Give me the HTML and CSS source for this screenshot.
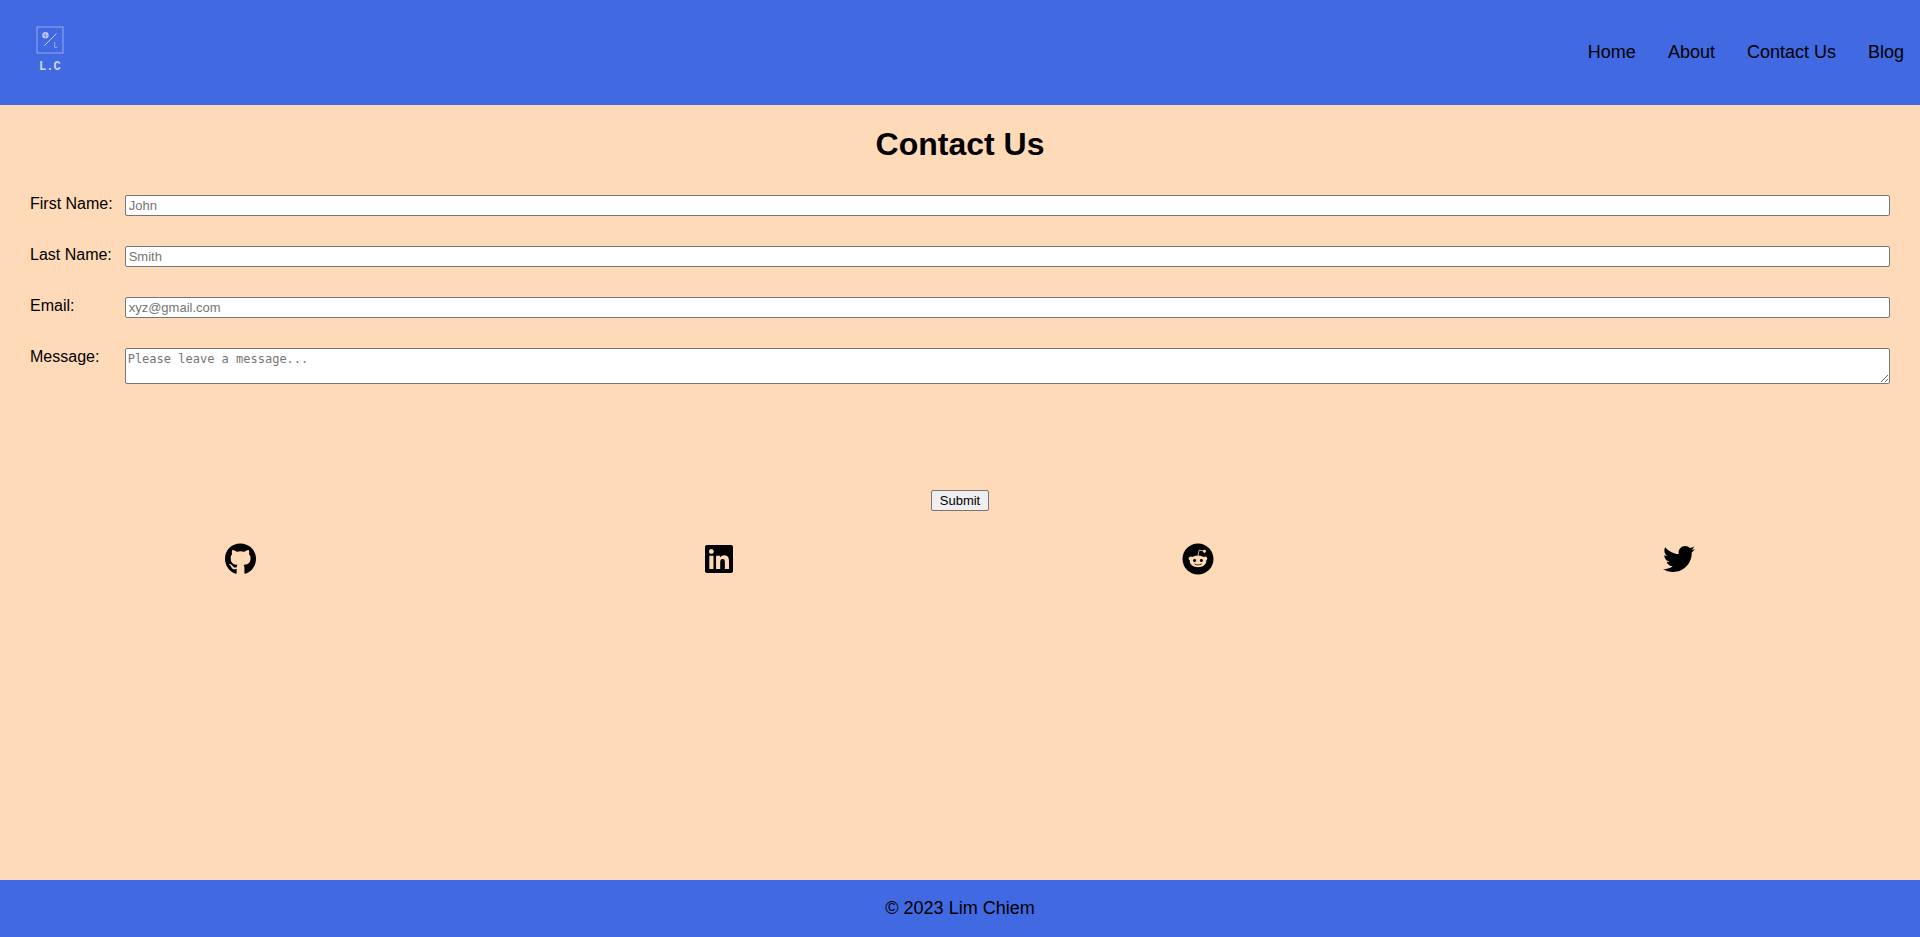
FILE: index.html
```html
<!DOCTYPE html>
<html lang="en">
<head>
<meta charset="utf-8">
<meta name="viewport" content="width=device-width, initial-scale=1">
<title>Contact Us</title>
<link rel="stylesheet" href="styles.css">
</head>
<body>
<header class="header">
  <a class="logo" href="#" aria-label="Home page">
    <svg width="60" height="60" viewBox="0 0 60 60">
      <rect class="logo-line" x="17" y="5" width="26" height="26"/>
      <path class="logo-line logo-slash" d="M24.3 23.7 36.5 11.5"/>
      <circle class="logo-dot" cx="25.4" cy="13.3" r="3.2"/>
      <path class="logo-grid" d="M22.4 13.3h6M25.4 10.3v6M23.4 11.3l4 4"/>
      <path class="logo-line" d="M34.7 20v5.4h2.6"/>
      <text class="logo-name" x="19" y="48">L.C</text>
    </svg>
  </a>
  <nav class="nav">
    <a href="#">Home</a>
    <a href="#">About</a>
    <a href="#">Contact Us</a>
    <a href="#">Blog</a>
  </nav>
</header>
<main class="main">
  <h1 class="title">Contact Us</h1>
  <form class="form">
    <div class="fields">
      <label for="first">First Name:</label>
      <input id="first" type="text" placeholder="John">
      <label for="last">Last Name:</label>
      <input id="last" type="text" placeholder="Smith">
      <label for="email">Email:</label>
      <input id="email" type="email" placeholder="xyz@gmail.com">
      <label for="message">Message:</label>
      <textarea id="message" rows="2" placeholder="Please leave a message..."></textarea>
    </div>
    <button class="submit" type="submit">Submit</button>
  </form>
  <div class="social">
    <a href="#" aria-label="GitHub"><svg viewBox="0 0 496 512" width="31" height="32"><path d="M165.9 397.4c0 2-2.3 3.6-5.2 3.6-3.3.3-5.6-1.3-5.6-3.6 0-2 2.3-3.6 5.2-3.6 3-.3 5.6 1.3 5.6 3.6zm-31.1-4.5c-.7 2 1.3 4.3 4.3 4.9 2.6 1 5.6 0 6.2-2s-1.3-4.3-4.3-5.2c-2.6-.7-5.5.3-6.2 2.3zm44.2-1.7c-2.9.7-4.9 2.6-4.6 4.9.3 2 2.9 3.3 5.9 2.6 2.9-.7 4.9-2.6 4.6-4.6-.3-1.9-3-3.2-5.9-2.9zM244.8 8C106.1 8 0 113.3 0 252c0 110.9 69.8 205.8 169.5 239.2 12.8 2.3 17.3-5.6 17.3-12.1 0-6.2-.3-40.4-.3-61.4 0 0-70 15-84.7-29.8 0 0-11.4-29.1-27.8-36.6 0 0-22.9-15.7 1.6-15.4 0 0 24.9 2 38.6 25.8 21.9 38.6 58.6 27.5 72.9 20.9 2.3-16 8.8-27.1 16-33.7-55.9-6.2-112.3-14.3-112.3-110.5 0-27.5 7.6-41.3 23.6-58.9-2.6-6.5-11.1-33.3 2.6-67.9 20.9-6.5 69 27 69 27 20-5.6 41.5-8.5 62.8-8.5s42.8 2.9 62.8 8.5c0 0 48.1-33.6 69-27 13.7 34.7 5.2 61.4 2.6 67.9 16 17.7 25.8 31.5 25.8 58.9 0 96.5-58.9 104.2-114.8 110.5 9.2 7.9 17 22.9 17 46.4 0 33.7-.3 75.4-.3 83.6 0 6.5 4.6 14.4 17.3 12.1C428.2 457.8 496 362.9 496 252 496 113.3 383.5 8 244.8 8z"/></svg></a>
    <a href="#" aria-label="LinkedIn"><svg viewBox="0 0 448 512" width="28" height="32"><path d="M416 32H31.9C14.3 32 0 46.5 0 64.3v383.4C0 465.5 14.3 480 31.9 480H416c17.6 0 32-14.5 32-32.3V64.3c0-17.8-14.4-32.3-32-32.3zM135.4 416H69V202.2h66.5V416zm-33.2-243c-21.3 0-38.5-17.3-38.5-38.5S80.9 96 102.2 96c21.2 0 38.5 17.3 38.5 38.5 0 21.3-17.2 38.5-38.5 38.5zm282.1 243h-66.4V312c0-24.8-.5-56.7-34.5-56.7-34.6 0-39.9 27-39.9 54.9V416h-66.4V202.2h63.7v29.2h.9c8.9-16.8 30.6-34.5 62.9-34.5 67.2 0 79.7 44.3 79.7 101.9V416z"/></svg></a>
    <a href="#" aria-label="Reddit"><svg viewBox="0 0 512 512" width="32" height="32"><path d="M201.5 305.5c-13.8 0-24.9-11.1-24.9-24.6 0-13.8 11.1-24.9 24.9-24.9 13.6 0 24.6 11.1 24.6 24.9 0 13.6-11.1 24.6-24.6 24.6zM504 256c0 137-111 248-248 248S8 393 8 256 119 8 256 8s248 111 248 248zm-132.3-41.2c-9.4 0-17.7 3.9-23.8 10-22.4-15.5-52.6-25.5-86.1-26.6l17.4-78.3 55.4 12.5c0 13.6 11.1 24.6 24.6 24.6 13.8 0 24.9-11.3 24.9-24.9s-11.1-24.9-24.9-24.9c-9.7 0-18 5.8-22.1 13.8l-61.2-13.6c-3-.8-6.1 1.4-6.9 4.4l-19.1 86.4c-33.2 1.4-63.1 11.3-85.5 26.8-6.1-6.4-14.7-10.2-24.1-10.2-34.9 0-46.3 46.9-14.4 62.8-1.1 5-1.7 10.2-1.7 15.5 0 52.6 59.2 95.2 132 95.2 73.1 0 132.3-42.6 132.3-95.2 0-5.3-.6-10.8-1.9-15.8 31.3-16 19.8-62.5-14.9-62.5zM302.8 331c-18.2 18.2-76.1 17.9-93.6 0-2.2-2.2-6.1-2.2-8.3 0-2.5 2.5-2.5 6.4 0 8.6 22.8 22.8 87.3 22.8 110.2 0 2.5-2.2 2.5-6.1 0-8.6-2.2-2.2-6.1-2.2-8.3 0zm7.7-75c-13.6 0-24.6 11.1-24.6 24.9 0 13.5 11.1 24.6 24.6 24.6 13.8 0 24.9-11.1 24.9-24.6 0-13.8-11-24.9-24.9-24.9z"/></svg></a>
    <a href="#" aria-label="Twitter"><svg viewBox="0 0 512 512" width="32" height="32"><path d="M459.37 151.716c.325 4.548.325 9.097.325 13.645 0 138.72-105.583 298.558-298.558 298.558-59.452 0-114.68-17.219-161.137-47.106 8.447.974 16.568 1.299 25.34 1.299 49.055 0 94.213-16.568 130.274-44.832-46.132-.975-84.792-31.188-98.112-72.772 6.498.974 12.995 1.624 19.818 1.624 9.421 0 18.843-1.3 27.614-3.573-48.081-9.747-84.143-51.98-84.143-102.985v-1.299c13.969 7.797 30.214 12.67 47.431 13.319-28.264-18.843-46.781-51.005-46.781-87.391 0-19.492 5.197-37.36 14.294-52.954 51.655 63.675 129.3 105.258 216.365 109.807-1.624-7.797-2.599-15.918-2.599-24.04 0-57.828 46.782-104.934 104.934-104.934 30.213 0 57.502 12.67 76.67 33.137 23.715-4.548 46.456-13.32 66.599-25.34-7.798 24.366-24.366 44.833-46.132 57.827 21.117-2.273 41.584-8.122 60.426-16.243-14.292 20.791-32.161 39.308-52.628 54.253z"/></svg></a>
  </div>
</main>
<footer class="footer">© 2023 Lim Chiem</footer>
</body>
</html>
```
FILE: styles.css
```css
* {
  box-sizing: border-box;
}

body {
  margin: 0;
  min-height: 100vh;
  display: flex;
  flex-direction: column;
  background: peachpuff;
  color: #000;
  font: 16px/18px "Liberation Sans", Arial, sans-serif;
}

.header {
  display: flex;
  justify-content: space-between;
  align-items: center;
  padding: 22px 16px 23px 20px;
  background: royalblue;
}

.logo,
.logo svg {
  display: block;
}

.logo-line {
  fill: none;
  stroke: #fff;
  stroke-opacity: 0.45;
}

.logo-slash {
  stroke-opacity: 0.7;
}

.logo-dot {
  fill: #fff;
  fill-opacity: 0.7;
}

.logo-grid {
  stroke: royalblue;
  stroke-opacity: 0.4;
}

.logo-name {
  fill: #fff;
  fill-opacity: 0.75;
  font: bold 12px "Liberation Mono", monospace;
}

.nav {
  display: flex;
  gap: 32px;
  font-size: 18px;
  line-height: 20px;
}

.nav a {
  color: inherit;
  text-decoration: none;
}

.main {
  flex: 1;
}

.title {
  margin: 20px 0 30px;
  font-size: 32px;
  line-height: 38px;
  text-align: center;
}

.form {
  display: flex;
  flex-direction: column;
  align-items: center;
  padding: 0 30px;
}

.fields {
  align-self: stretch;
  display: grid;
  grid-template-columns: auto 1fr;
  column-gap: 12px;
  row-gap: 30px;
  align-items: start;
  margin-top: 2px;
}

.fields input,
.fields textarea {
  width: 100%;
  margin: 0;
  border: 1px solid #767676;
  border-radius: 2px;
  background: #fff;
}

.fields input {
  height: 21px;
  padding: 1px 3px;
  font: 13px "Liberation Sans", Arial, sans-serif;
}

.fields textarea {
  display: block;
  height: 36px;
  padding: 2px;
  font: 12px/16px "DejaVu Sans Mono", monospace;
}

.fields ::placeholder {
  color: #757575;
}

.submit {
  margin-top: 106px;
  height: 21px;
  padding: 1px 8px;
  border: 1px solid #767676;
  border-radius: 2px;
  background: #efefef;
  color: #000;
  font: 13px "Liberation Sans", Arial, sans-serif;
}

.social {
  display: flex;
  justify-content: space-around;
  margin: 32px 0;
}

.social a,
.social svg {
  display: block;
}

.footer {
  padding: 18px 16px 19px;
  background: royalblue;
  font-size: 18px;
  line-height: 20px;
  text-align: center;
}
```
